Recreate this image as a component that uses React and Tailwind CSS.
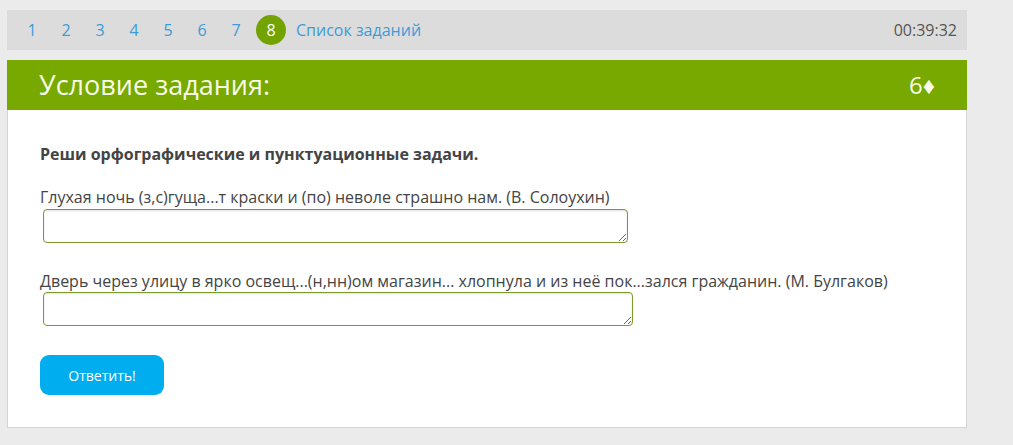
import { useState } from 'react';

const tasks = [1, 2, 3, 4, 5, 6, 7, 8];

export default function App() {
    const [answers, setAnswers] = useState(['', '']);
    const current = 8;

    const setAnswer = (idx, value) => {
        const next = [...answers];
        next[idx] = value;
        setAnswers(next);
    };

    return (
        <div className="min-h-[445px] bg-[#ebebeb] pt-[10px] pl-[7px] font-['Open_Sans',sans-serif]">
            <div className="w-[960px]">
                {/* Task navigation */}
                <div className="h-[40px] bg-[#dcdcdc] flex items-center pl-[8px] pr-[10px]">
                    <div className="flex items-center">
                        {tasks.map((n) =>
                            n === current ? (
                                <span
                                    key={n}
                                    className="w-[30px] h-[30px] rounded-full bg-[#72a300] text-white text-[16px] flex items-center justify-center ml-[3px] mr-[2px]"
                                >
                                    {n}
                                </span>
                            ) : (
                                <a key={n} className="w-[34px] text-center text-[16px] text-[#3d9bd8] cursor-pointer">
                                    {n}
                                </a>
                            )
                        )}
                        <a className="ml-[8px] text-[16px] text-[#3d9bd8] cursor-pointer">Список заданий</a>
                    </div>
                    <span className="ml-auto text-[16px] text-[#555]">00:39:32</span>
                </div>

                {/* Task card */}
                <div className="mt-[10px] border border-[#d4d4d4] bg-white">
                    <div className="h-[50px] bg-[#77a900] flex items-center justify-between pl-[32px] pr-[32px] -mx-px -mt-px">
                        <h2 className="text-[27px] text-[#f7fbe8]">Условие задания:</h2>
                        <span className="text-[24px] text-[#f7fbe8]">6♦</span>
                    </div>

                    <div className="pl-[32px] pt-[33px] pb-[32px] text-[16px] text-[#444]">
                        <p className="font-bold leading-[22px]">Реши орфографические и пунктуационные задачи.</p>

                        <p className="mt-[21px] leading-[22px]">Глухая ночь (з,с)гуща...т краски и (по) неволе страшно нам. (В. Солоухин)</p>
                        <textarea
                            value={answers[0]}
                            onChange={(e) => setAnswer(0, e.target.value)}
                            className="block ml-[3px] mt-[1px] w-[585px] h-[34px] border border-[#7a9a2a] rounded-[4px] shadow-[inset_0_1px_2px_rgba(0,0,0,0.12)] outline-none"
                        />

                        <p className="mt-[27px] leading-[22px]">
                            Дверь через улицу в ярко освещ...(н,нн)ом магазин... хлопнула и из неё пок...зался гражданин. (М. Булгаков)
                        </p>
                        <textarea
                            value={answers[1]}
                            onChange={(e) => setAnswer(1, e.target.value)}
                            className="block ml-[3px] w-[590px] h-[34px] border border-[#7a9a2a] rounded-[4px] shadow-[inset_0_1px_2px_rgba(0,0,0,0.12)] outline-none"
                        />

                        <button className="mt-[29px] w-[124px] h-[40px] rounded-[9px] bg-[#00aeef] text-white text-[14px]">
                            Ответить!
                        </button>
                    </div>
                </div>
            </div>
        </div>
    );
}
